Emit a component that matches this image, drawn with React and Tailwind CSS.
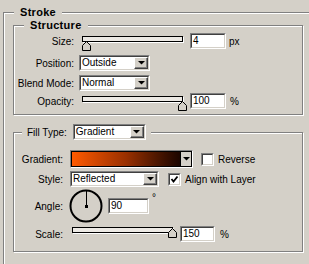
import React from 'react'

const etched = 'border border-[#808080] shadow-[1px_1px_0_#fff,inset_1px_1px_0_#fff]'
const sunken = 'border border-t-[#808080] border-l-[#808080] border-b-white border-r-white'
const sunkenInner = 'border border-t-[#404040] border-l-[#404040] border-b-[#d4d0c8] border-r-[#d4d0c8]'

function DownArrow() {
  return (
    <svg width="7" height="4" viewBox="0 0 7 4">
      <polygon points="0,0 7,0 3.5,3.5" fill="#000" />
    </svg>
  )
}

function ArrowButton() {
  return (
    <div className="w-[14px] h-full flex items-center justify-center bg-[#d4d0c8] border border-t-white border-l-white border-b-[#404040] border-r-[#404040] shadow-[inset_-1px_-1px_0_#808080]">
      <DownArrow />
    </div>
  )
}

function Select({ value, width }) {
  return (
    <div className={`flex h-[16px] ${width} ${sunken}`}>
      <div className={`flex flex-1 items-center bg-white ${sunkenInner}`}>
        <span className="flex-1 pl-[1px] leading-[12px]">{value}</span>
        <ArrowButton />
      </div>
    </div>
  )
}

function Input({ value, width }) {
  return (
    <div className={`flex h-[16px] ${width} ${sunken}`}>
      <div className={`flex flex-1 items-center bg-white pl-[1px] leading-[12px] ${sunkenInner}`}>{value}</div>
    </div>
  )
}

function Slider({ thumb, low }) {
  return (
    <div className="relative w-[108px] h-[16px]">
      <div className={`w-[101px] h-[6px] ${low ? 'mt-[5px]' : 'mt-[1px]'} border border-black bg-[#ece9e4] shadow-[1px_1px_0_#fff]`} />
      <svg className={`absolute ${thumb} ${low ? 'top-[5px]' : 'top-[1px]'}`} width="9" height="10" viewBox="0 0 9 10">
        <path d="M4.5 0.5 L8.5 4.5 V9.5 H0.5 V4.5 Z" fill="#d4d0c8" stroke="#000" />
      </svg>
    </div>
  )
}

function Checkbox({ checked }) {
  return (
    <div className={`w-[13px] h-[13px] flex ${sunken}`}>
      <div className={`flex-1 bg-white flex items-center justify-center ${sunkenInner}`}>
        {checked && (
          <svg width="9" height="9" viewBox="0 0 9 9">
            <polyline points="1.5,4 3.5,6.5 7.5,1.5" fill="none" stroke="#000" strokeWidth="1.8" />
          </svg>
        )}
      </div>
    </div>
  )
}

function Dial() {
  return (
    <svg width="34" height="34" viewBox="0 0 34 34">
      <circle cx="17" cy="17" r="15.5" fill="none" stroke="#000" strokeWidth="2" />
      <line x1="17.5" y1="2" x2="17.5" y2="17" stroke="#000" strokeWidth="1" />
      <rect x="16" y="16" width="3" height="3" fill="#000" />
    </svg>
  )
}

export default function App() {
  return (
    <div className="w-[309px] h-[264px] overflow-hidden bg-[#d4d0c8] text-black text-[10px] font-['Liberation_Sans',Arial,sans-serif]">
      <fieldset className={`ml-[3px] mt-[6px] w-[340px] h-[300px] pl-[9px] ${etched}`}>
        <legend className="ml-[1px] px-[6px] bg-[#d4d0c8] font-bold text-[11px] leading-[13px] tracking-[0.3px]">Stroke</legend>

        {/* Structure */}
        <fieldset className={`w-[290px] pb-[5px] ${etched}`}>
          <legend className="ml-[10px] px-[6px] bg-[#d4d0c8] font-bold text-[11px] leading-[13px] tracking-[0.3px]">Structure</legend>
          <div className="flex items-center h-[16px] mt-[1px]">
            <span className="w-[60px] text-right">Size:</span>
            <div className="ml-[8px]"><Slider thumb="left-0" low /></div>
            <Input value="4" width="w-[36px]" />
            <span className="ml-[3px]">px</span>
          </div>
          <div className="flex items-center h-[16px] mt-[6px]">
            <span className="w-[60px] text-right">Position:</span>
            <div className="ml-[5px]"><Select value="Outside" width="w-[71px]" /></div>
          </div>
          <div className="flex items-center h-[16px] mt-[4px]">
            <span className="w-[60px] text-right">Blend Mode:</span>
            <div className="ml-[5px]"><Select value="Normal" width="w-[71px]" /></div>
          </div>
          <div className="flex items-center h-[16px] mt-[2px]">
            <span className="w-[60px] text-right">Opacity:</span>
            <div className="ml-[8px]"><Slider thumb="left-[96px]" low /></div>
            <Input value="100" width="w-[36px]" />
            <span className="ml-[4px]">%</span>
          </div>
        </fieldset>

        {/* Fill */}
        <fieldset className={`mt-[9px] w-[290px] pb-[9px] ${etched}`}>
          <legend className="ml-[8px] px-[5px] bg-[#d4d0c8] flex items-center">
            <span>Fill Type:</span>
            <div className="ml-[6px]"><Select value="Gradient" width="w-[73px]" /></div>
          </legend>
          <div className="flex items-center h-[18px] mt-[10px]">
            <span className="w-[49px] text-right">Gradient:</span>
            <div className={`ml-[7px] flex w-[123px] h-[18px] ${sunken}`}>
              <div className="flex flex-1 border border-black">
                <div className="flex-1 bg-gradient-to-r from-[#ff5a00] via-[#9a3000] to-[#1c0600]" />
                <div className="w-[11px] flex items-center justify-center bg-[#d4d0c8] border-l border-black">
                  <DownArrow />
                </div>
              </div>
            </div>
            <div className="ml-[8px]"><Checkbox /></div>
            <span className="ml-[4px]">Reverse</span>
          </div>
          <div className="flex items-center h-[16px] mt-[3px]">
            <span className="w-[49px] text-right">Style:</span>
            <div className="ml-[7px]"><Select value="Reflected" width="w-[89px]" /></div>
            <div className="ml-[9px]"><Checkbox checked /></div>
            <span className="ml-[4px]">Align with Layer</span>
          </div>
          <div className="flex items-center h-[34px] mt-[2px]">
            <span className="w-[49px] text-right">Angle:</span>
            <div className="ml-[6px] flex"><Dial /></div>
            <div className="ml-[5px]"><Input value="90" width="w-[41px]" /></div>
            <span className="ml-[3px] self-start mt-[1px]">°</span>
          </div>
          <div className="flex items-center h-[16px] mt-[3px]">
            <span className="w-[49px] text-right">Scale:</span>
            <div className="ml-[9px]"><Slider thumb="left-[96px]" /></div>
            <Input value="150" width="w-[35px]" />
            <span className="ml-[5px]">%</span>
          </div>
        </fieldset>
      </fieldset>
    </div>
  )
}
